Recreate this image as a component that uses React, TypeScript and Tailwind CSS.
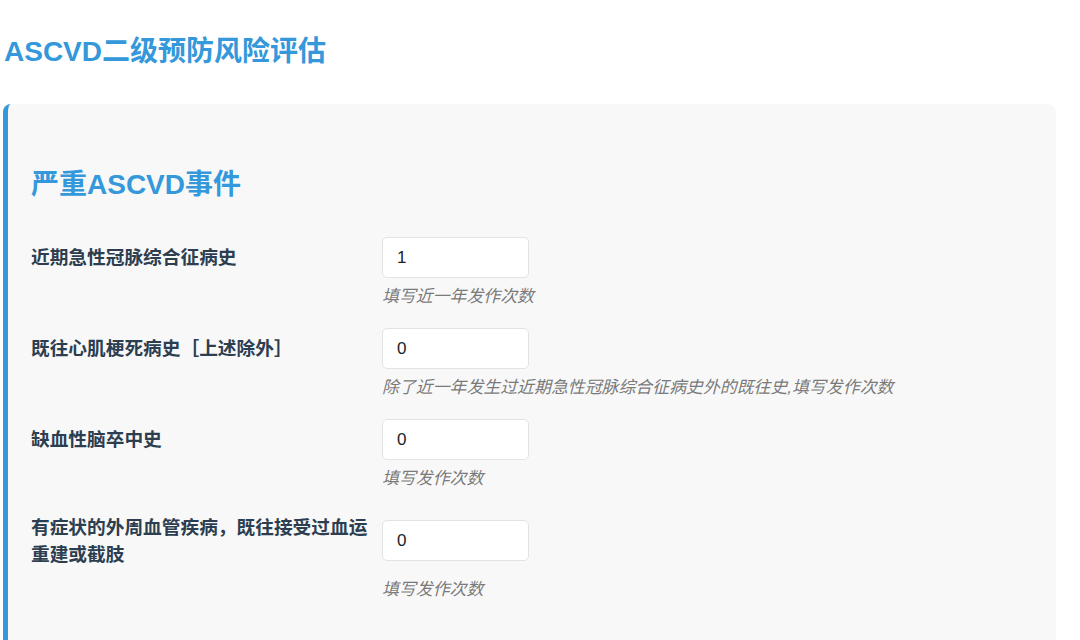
import React, { useState } from "react";

interface Field {
  id: string;
  label: string;
  help: string;
  initial: string;
}

const fields: Field[] = [
  { id: "acs", label: "近期急性冠脉综合征病史", help: "填写近一年发作次数", initial: "1" },
  {
    id: "mi",
    label: "既往心肌梗死病史［上述除外］",
    help: "除了近一年发生过近期急性冠脉综合征病史外的既往史,填写发作次数",
    initial: "0",
  },
  { id: "stroke", label: "缺血性脑卒中史", help: "填写发作次数", initial: "0" },
  {
    id: "pad",
    label: "有症状的外周血管疾病，既往接受过血运重建或截肢",
    help: "填写发作次数",
    initial: "0",
  },
];

const FONT = "font-['Liberation_Sans','Noto_Sans_CJK_SC',sans-serif]";

function FormRow({ field }: { field: Field }) {
  const [value, setValue] = useState(field.initial);

  return (
    <div className="mb-[19px]">
      <div className="flex items-center">
        <label
          htmlFor={field.id}
          className="w-[351px] shrink-0 py-[3.5px] pr-[8px] text-[18.7px] leading-[27px] font-bold text-[#2c3e50]"
        >
          {field.label}
        </label>
        <input
          id={field.id}
          type="text"
          value={value}
          onChange={(e) => setValue(e.target.value)}
          className="h-[41px] w-[147px] rounded-[5px] border border-[#e3e3e3] bg-white px-[14px] text-[17px] text-[#222] outline-none focus:border-[#3498db]"
        />
      </div>
      <div className="mt-[7px] pl-[351px] text-[16.9px] leading-[24px] text-[#7a7a7a] italic">
        {field.help}
      </div>
    </div>
  );
}

export default function App() {
  return (
    <div className={`min-h-screen bg-white pl-[3px] ${FONT}`}>
      <h1 className="pt-[35px] pl-[1px] text-[28px] leading-[34px] font-bold text-[#3498db]">
        ASCVD二级预防风险评估
      </h1>

      <section className="mt-[35px] w-[1053px] rounded-[8px] border-l-[5px] border-[#3498db] bg-[#f8f8f8] pt-[64px] pb-[40px] pl-[23px]">
        <h2 className="text-[28px] leading-[34px] font-bold text-[#3498db]">严重ASCVD事件</h2>
        <div className="mt-[35px]">
          {fields.map((f) => (
            <FormRow key={f.id} field={f} />
          ))}
        </div>
      </section>
    </div>
  );
}
